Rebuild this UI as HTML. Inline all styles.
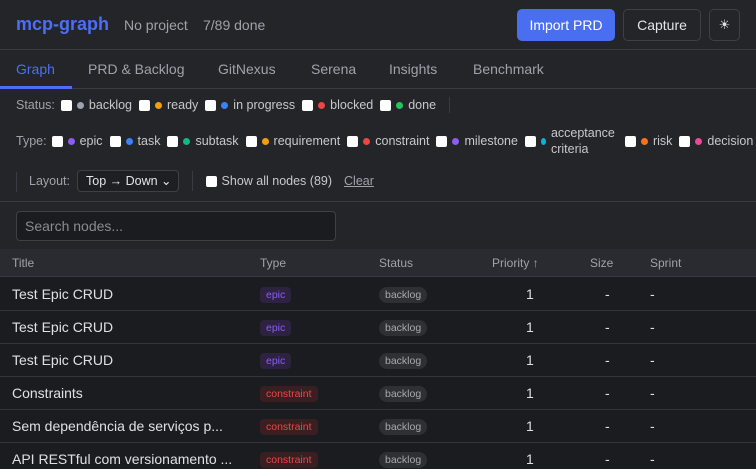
<!DOCTYPE html>
<html style="overflow:hidden"><head><meta charset="utf-8"><style>
*{box-sizing:border-box;margin:0;padding:0}
html,body{width:756px;height:469px;overflow:hidden}
body{background:#242529;font-family:"Liberation Sans",sans-serif;color:#d4d4d8;position:relative}
.abs{position:absolute;white-space:nowrap}
.hdr{position:absolute;left:0;top:0;width:756px;height:50px;border-bottom:1px solid #3a3b40}
.btn{position:absolute;top:9px;height:32px;border-radius:5px;font-size:14px;display:flex;align-items:center;justify-content:center}
.tabs{position:absolute;top:51px;left:0;width:756px;height:38px;border-bottom:1px solid #3a3b40;font-size:14px;color:#a1a1aa}
.tabs span{position:absolute;top:10px}
.f{font-size:12.5px;color:#c8c8cc;position:absolute;display:flex;align-items:center;white-space:nowrap}
.cb{display:inline-block;width:11px;height:11px;background:#fff;border-radius:2px;margin:0 5px 0 7px;flex:none}
.d{display:inline-block;width:7px;height:7px;border-radius:50%;margin-right:5px;flex:none}
.lbl{color:#a1a1aa}
.tbl{position:absolute;left:0;top:249px;width:756px;height:220px;background:#1b1c20;overflow:hidden}
.th{position:absolute;left:0;top:0;width:756px;height:28px;background:#2a2b30;border-bottom:1px solid #3a3b40;font-size:12px;color:#a1a1aa}
.th span{position:absolute;top:7px}
.row{position:absolute;left:0;width:756px;height:33px;border-bottom:1px solid #34353a;font-size:14px;color:#e0e0e4}
.row span{position:absolute;white-space:nowrap}
.t{left:12px;top:8px}
.pill{top:9px;height:16px;line-height:16px;font-size:10.5px;padding:0 6px;border-radius:4px}
.ep{left:260px;background:#2d2340;color:#8b5cf6}
.co{left:260px;background:#3a1f22;color:#ef4444}
.bk{left:379px;background:#2f3034;color:#a8a8ae;border-radius:8px}
.p{left:526px;top:8px}
.s1{left:605px;top:8px}.s2{left:650px;top:8px}
</style></head><body>
<div class="hdr">
<span class="abs" style="left:16px;top:14px;font-size:18px;font-weight:bold;color:#4c6ef5">mcp-graph</span>
<span class="abs" style="left:124px;top:17px;font-size:14px;color:#a1a1aa">No project</span>
<span class="abs" style="left:203px;top:17px;font-size:14px;color:#a1a1aa">7/89 done</span>
<div class="btn" style="left:517px;width:98px;background:#4a6ef0;color:#fff">Import PRD</div>
<div class="btn" style="left:623px;width:78px;border:1px solid #3f4046;color:#e4e4e7">Capture</div>
<div class="btn" style="left:709px;width:31px;border:1px solid #3f4046;color:#e4e4e7;font-size:13px">☀</div>
</div>
<div class="tabs">
<span style="left:16px;color:#4c6ef5">Graph</span>
<span style="left:88px">PRD &amp; Backlog</span>
<span style="left:218px">GitNexus</span>
<span style="left:311px">Serena</span>
<span style="left:389px">Insights</span>
<span style="left:473px">Benchmark</span>
<div style="position:absolute;left:0;top:35px;width:72px;height:3px;background:#4c6ef5"></div>
</div>
<div class="f" style="left:16px;top:97px"><span class="lbl">Status:</span><span class="cb" style="margin-left:6px"></span><span class="d" style="background:#9ca3af"></span>backlog<span class="cb"></span><span class="d" style="background:#f59e0b"></span>ready<span class="cb"></span><span class="d" style="background:#3b82f6"></span>in progress<span class="cb"></span><span class="d" style="background:#ef4444"></span>blocked<span class="cb"></span><span class="d" style="background:#22c55e"></span>done<span style="display:inline-block;width:1px;height:16px;background:#3a3b40;margin-left:13px"></span></div>
<div class="f" style="left:16px;top:125px"><span class="lbl">Type:</span><span class="cb" style="margin-left:5px"></span><span class="d" style="background:#8b5cf6"></span>epic<span class="cb"></span><span class="d" style="background:#3b82f6"></span>task<span class="cb"></span><span class="d" style="background:#10b981"></span>subtask<span class="cb"></span><span class="d" style="background:#f59e0b"></span>requirement<span class="cb"></span><span class="d" style="background:#ef4444"></span>constraint<span class="cb"></span><span class="d" style="background:#8b5cf6"></span>milestone<span class="cb"></span><span class="d" style="background:#06b6d4;width:5px"></span><span style="line-height:16px;white-space:normal;width:72px;display:inline-block">acceptance criteria</span><span class="cb" style="margin-left:2px"></span><span class="d" style="background:#f97316"></span>risk<span class="cb"></span><span class="d" style="background:#ec4899"></span>decision</div>
<div style="position:absolute;left:16px;top:172px;width:1px;height:20px;background:#3a3b40"></div>
<div class="f" style="left:29px;top:170px"><span class="lbl" style="margin-right:7px">Layout:</span><span style="display:inline-block;border:1px solid #3f4046;border-radius:4px;background:#1e1f23;height:22px;line-height:20px;padding:0 6px 0 8px;color:#e4e4e7;font-size:12.5px">Top → Down ⌄</span><span style="display:inline-block;width:1px;height:20px;background:#3a3b40;margin:0 13px"></span><span class="cb" style="margin-left:0"></span>Show all nodes (89)<span style="margin-left:12px;text-decoration:underline;color:#a1a1aa">Clear</span></div>
<div style="position:absolute;left:0;top:201px;width:756px;height:1px;background:#3a3b40"></div>
<div style="position:absolute;left:16px;top:211px;width:320px;height:30px;border:1px solid #3f4046;border-radius:4px;background:#1b1c20;font-size:14px;color:#8a8a90;padding:6px 8px">Search nodes...</div>
<div class="tbl">
<div class="th"><span style="left:12px">Title</span><span style="left:260px">Type</span><span style="left:379px">Status</span><span style="left:492px">Priority ↑</span><span style="left:590px">Size</span><span style="left:650px">Sprint</span></div>
<div class="row" style="top:29px"><span class="t">Test Epic CRUD</span><span class="pill ep">epic</span><span class="pill bk">backlog</span><span class="p">1</span><span class="s1">-</span><span class="s2">-</span></div>
<div class="row" style="top:62px"><span class="t">Test Epic CRUD</span><span class="pill ep">epic</span><span class="pill bk">backlog</span><span class="p">1</span><span class="s1">-</span><span class="s2">-</span></div>
<div class="row" style="top:95px"><span class="t">Test Epic CRUD</span><span class="pill ep">epic</span><span class="pill bk">backlog</span><span class="p">1</span><span class="s1">-</span><span class="s2">-</span></div>
<div class="row" style="top:128px"><span class="t">Constraints</span><span class="pill co">constraint</span><span class="pill bk">backlog</span><span class="p">1</span><span class="s1">-</span><span class="s2">-</span></div>
<div class="row" style="top:161px"><span class="t">Sem dependência de serviços p...</span><span class="pill co">constraint</span><span class="pill bk">backlog</span><span class="p">1</span><span class="s1">-</span><span class="s2">-</span></div>
<div class="row" style="top:194px"><span class="t">API RESTful com versionamento ...</span><span class="pill co">constraint</span><span class="pill bk">backlog</span><span class="p">1</span><span class="s1">-</span><span class="s2">-</span></div>
</div>
</body></html>
